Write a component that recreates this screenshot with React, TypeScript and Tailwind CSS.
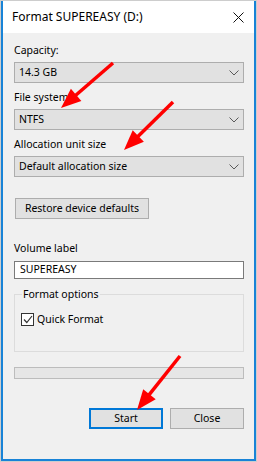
import React from "react";

type Pt = [number, number];

const Arrow = ({ from, to }: { from: Pt; to: Pt }) => {
  const dx = to[0] - from[0];
  const dy = to[1] - from[1];
  const len = Math.hypot(dx, dy);
  const ux = dx / len;
  const uy = dy / len;
  const head = 20;
  const half = 8;
  const bx = to[0] - ux * head;
  const by = to[1] - uy * head;
  const pts = [
    `${to[0]},${to[1]}`,
    `${bx - uy * half},${by + ux * half}`,
    `${bx + uy * half},${by - ux * half}`,
  ].join(" ");
  return (
    <g>
      <line x1={from[0]} y1={from[1]} x2={bx + ux * 2} y2={by + uy * 2} stroke="#ff0000" strokeWidth={3.5} />
      <polygon points={pts} fill="#ff0000" />
    </g>
  );
};

const Chevron = () => (
  <svg width="10" height="6" viewBox="0 0 10 6" className="mr-[4px]">
    <path d="M0.5 0.5 L5 5 L9.5 0.5" fill="none" stroke="#5a5a5a" strokeWidth="1" />
  </svg>
);

const Select = ({ value }: { value: string }) => (
  <div className="mt-[4px] flex h-[21px] w-[230px] items-center justify-between border border-[#adadad] bg-[#e1e1e1] pl-[4px]">
    <span>{value}</span>
    <Chevron />
  </div>
);

const Label = ({ children, top }: { children: React.ReactNode; top: string }) => (
  <div className={`${top} h-4 leading-4`}>{children}</div>
);

const App = () => {
  return (
    <div
      className="relative h-[462px] w-[257px] overflow-hidden border border-[#cdcdcd] text-[10.5px] text-black"
      style={{ fontFamily: '"Noto Sans", "Open Sans", sans-serif' }}
    >
      <div className="flex h-full flex-col border-2 border-t-0 border-[#1883d7] bg-[#f0f0f0]">
        <div className="flex h-[32px] shrink-0 items-center justify-between bg-white pl-[9px] pr-[10px] text-[12px]">
          <span>Format SUPEREASY (D:)</span>
          <svg width="11" height="11" viewBox="0 0 11 11">
            <path d="M0.5 0.5 L10.5 10.5 M10.5 0.5 L0.5 10.5" stroke="#111" strokeWidth="1" />
          </svg>
        </div>

        <div className="flex flex-col pl-[11px]">
          <Label top="mt-[9px]">Capacity:</Label>
          <Select value="14.3 GB" />
          <Label top="mt-[6px]">File system</Label>
          <Select value="NTFS" />
          <Label top="mt-[6px]">Allocation unit size</Label>
          <Select value="Default allocation size" />

          <button className="ml-px mt-[21px] h-[21px] w-[134px] border border-[#adadad] bg-[#e1e1e1] text-center leading-[19px]">
            Restore device defaults
          </button>

          <Label top="mt-[21px]">Volume label</Label>
          <div className="mt-[5px] flex h-[18px] w-[230px] items-center border border-[#7a7a7a] bg-white pl-[5px]">
            SUPEREASY
          </div>

          <div className="relative mt-[15px] h-[58px] w-[230px] border border-[#dcdcdc]">
            <span className="absolute left-[7px] top-[-9px] bg-[#f0f0f0] px-px leading-4">Format options</span>
            <div className="ml-[6px] mt-[16px] flex items-center gap-[3px]">
              <div className="flex h-[13px] w-[13px] items-center justify-center border border-[#333] bg-white">
                <svg width="10" height="9" viewBox="0 0 10 9">
                  <path d="M1 4.5 L3.8 7.5 L9 1" fill="none" stroke="#333" strokeWidth="1.2" />
                </svg>
              </div>
              <span className="leading-4">Quick Format</span>
            </div>
          </div>

          <div className="mt-[15px] h-[12px] w-[230px] border border-[#bcbcbc] bg-[#e6e6e6]" />

          <div className="mt-[29px] flex w-[230px] justify-end gap-[7px]">
            <button className="h-[21px] w-[74px] border-2 border-[#0078d7] bg-[#e1e1e1] leading-[17px]">Start</button>
            <button className="h-[21px] w-[74px] border border-[#adadad] bg-[#e1e1e1] leading-[19px]">Close</button>
          </div>
        </div>
      </div>

      <svg className="pointer-events-none absolute left-[-1px] top-[-1px]" width="257" height="462" viewBox="0 0 257 462">
        <Arrow from={[113, 63]} to={[61, 108]} />
        <Arrow from={[173, 102]} to={[124, 150]} />
        <Arrow from={[180, 356]} to={[137, 410]} />
      </svg>
    </div>
  );
};

export default App;
